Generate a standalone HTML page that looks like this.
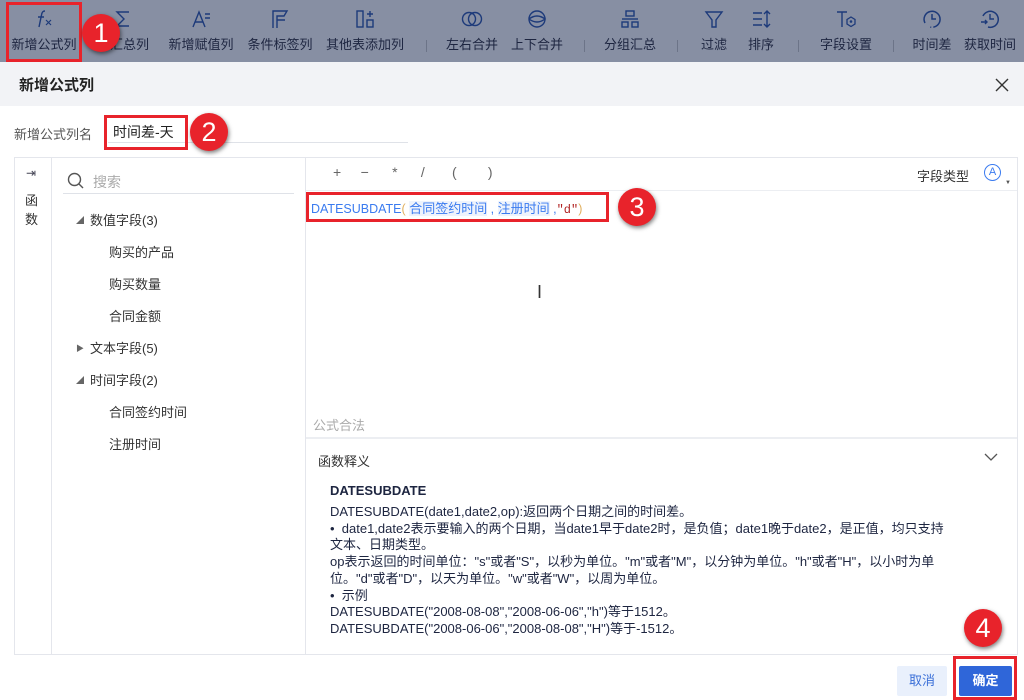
<!DOCTYPE html>
<html><head><meta charset="utf-8"><style>
*{margin:0;padding:0;box-sizing:border-box}
body{width:1024px;height:700px;overflow:hidden;background:#fff;font-family:"Liberation Sans","Noto Sans CJK SC",sans-serif;position:relative;color:#333}
.a{position:absolute}
.tb{left:0;top:0;width:1024px;height:62px;background:#878fa3}
.ti{position:absolute;top:0;height:62px;text-align:center;font-size:13px;color:#1d2540;white-space:nowrap}
.ti svg{display:block;margin:8px auto 4px;width:22px;height:22px}
.sep{position:absolute;top:40px;width:1px;height:12px;background:#6c7488}
.badge{position:absolute;width:38px;height:38px;border-radius:50%;background:#e8232b;color:#fff;font-size:27px;text-align:center;line-height:38px;box-shadow:1px 2px 4px rgba(0,0,0,.5)}
.rb{position:absolute;border:3px solid #e8232b}
.tr{height:32px;line-height:32px;white-space:nowrap}
.tr i{display:inline-block;width:14px;font-style:normal;font-size:8px;color:#666;vertical-align:top}
</style></head><body>
<div class="a tb"></div>
<div class="ti" style="left:8px;width:72px"><svg viewBox="0 0 22 22"><path d="M12 3c-2 0-3 1-3.5 4L6 19M5 9h6" stroke="#1d3a7a" stroke-width="1.4" fill="none"/><path d="M13 12l5 5M18 12l-5 5" stroke="#1d3a7a" stroke-width="1.2"/></svg>新增公式列</div>
<div class="ti" style="left:88px;width:70px"><svg viewBox="0 0 22 22"><path d="M17 4H5l7 7-7 7h12" stroke="#1d3a7a" stroke-width="1.4" fill="none"/></svg>新汇总列</div>
<div class="ti" style="left:166px;width:70px"><svg viewBox="0 0 22 22"><path d="M3 19l6-15 6 15M5 14h8M15 6h5M15 10h5" stroke="#1d3a7a" stroke-width="1.4" fill="none"/></svg>新增赋值列</div>
<div class="ti" style="left:245px;width:70px"><svg viewBox="0 0 22 22"><path d="M4 20V3h14l-3 5h-7v12M8 8v4h8" stroke="#1d3a7a" stroke-width="1.4" fill="none"/></svg>条件标签列</div>
<div class="ti" style="left:323px;width:84px"><svg viewBox="0 0 22 22"><rect x="3" y="3" width="6" height="16" stroke="#1d3a7a" stroke-width="1.4" fill="none"/><rect x="13" y="12" width="6" height="7" stroke="#1d3a7a" stroke-width="1.4" fill="none"/><path d="M16 3v6M13 6h6" stroke="#1d3a7a" stroke-width="1.4"/></svg>其他表添加列</div>
<div class="sep" style="left:426px"></div>
<div class="ti" style="left:444px;width:56px"><svg viewBox="0 0 22 22"><circle cx="8" cy="11" r="6.5" stroke="#1d3a7a" stroke-width="1.4" fill="none"/><circle cx="14" cy="11" r="6.5" stroke="#1d3a7a" stroke-width="1.4" fill="none"/></svg>左右合并</div>
<div class="ti" style="left:509px;width:56px"><svg viewBox="0 0 22 22"><circle cx="11" cy="11" r="8" stroke="#1d3a7a" stroke-width="1.4" fill="none"/><path d="M3 11q8-6 16 0q-8 6-16 0" stroke="#1d3a7a" stroke-width="1.4" fill="none"/></svg>上下合并</div>
<div class="sep" style="left:584px"></div>
<div class="ti" style="left:602px;width:56px"><svg viewBox="0 0 22 22"><rect x="7" y="3" width="8" height="5" stroke="#1d3a7a" stroke-width="1.4" fill="none"/><rect x="3" y="14" width="6" height="5" stroke="#1d3a7a" stroke-width="1.4" fill="none"/><rect x="13" y="14" width="6" height="5" stroke="#1d3a7a" stroke-width="1.4" fill="none"/><path d="M3 11h16" stroke="#1d3a7a" stroke-width="1.4"/></svg>分组汇总</div>
<div class="sep" style="left:677px"></div>
<div class="ti" style="left:697px;width:34px"><svg viewBox="0 0 22 22"><path d="M3 4h16l-6 8v7h-4v-7z" stroke="#1d3a7a" stroke-width="1.4" fill="none"/></svg>过滤</div>
<div class="ti" style="left:744px;width:34px"><svg viewBox="0 0 22 22"><path d="M3 5h9M3 11h9M3 17h9M17 3v16M14 6l3-3 3 3M14 16l3 3 3-3" stroke="#1d3a7a" stroke-width="1.4" fill="none"/></svg>排序</div>
<div class="sep" style="left:798px"></div>
<div class="ti" style="left:816px;width:60px"><svg viewBox="0 0 22 22"><path d="M2 4h10M7 4v15" stroke="#1d3a7a" stroke-width="1.4"/><path d="M16 9l4 2.5v4.5l-4 2.5-4-2.5v-4.5z" stroke="#1d3a7a" stroke-width="1.3" fill="none"/><circle cx="16" cy="13.5" r="1.3" fill="#1d3a7a"/></svg>字段设置</div>
<div class="sep" style="left:893px"></div>
<div class="ti" style="left:909px;width:46px"><svg viewBox="0 0 22 22"><path d="M4 15A8 8 0 1 1 9 19" stroke="#1d3a7a" stroke-width="1.5" fill="none" stroke-dasharray="40 2 1 2 1 2"/><path d="M11 6v5h4" stroke="#1d3a7a" stroke-width="1.5" fill="none"/></svg>时间差</div>
<div class="ti" style="left:960px;width:60px"><svg viewBox="0 0 22 22"><path d="M4 8A8 8 0 1 1 9 19" stroke="#1d3a7a" stroke-width="1.5" fill="none"/><path d="M11 6v5h4M2 14h6M6 12l2 2-2 2" stroke="#1d3a7a" stroke-width="1.4" fill="none"/></svg>获取时间</div>
<div class="rb" style="left:6px;top:2px;width:76px;height:60px"></div>
<div class="badge" style="left:82px;top:14px">1</div>

<div class="a" style="left:0;top:62px;width:1024px;height:44px;background:#f2f3f6"></div>
<div class="a" style="left:19px;top:74px;font-size:15px;font-weight:bold;color:#222">新增公式列</div>
<svg class="a" style="left:995px;top:78px" width="14" height="14"><path d="M1 1l12 12M13 1L1 13" stroke="#333" stroke-width="1.4"/></svg>

<div class="a" style="left:14px;top:124px;font-size:13px;color:#555">新增公式列名</div>
<div class="a" style="left:108px;top:142px;width:300px;height:1px;background:#dfe2e8"></div>
<div class="a" style="left:113px;top:122px;font-size:14px;color:#222">时间差-天</div>
<div class="rb" style="left:104px;top:115px;width:84px;height:35px"></div>
<div class="badge" style="left:190px;top:113px">2</div>

<div class="a" style="left:14px;top:157px;width:1004px;height:498px;border:1px solid #e4e6ec"></div>
<div class="a" style="left:51px;top:157px;width:1px;height:498px;background:#e4e6ec"></div>
<div class="a" style="left:305px;top:157px;width:1px;height:498px;background:#e4e6ec"></div>
<div class="a" style="left:26px;top:166px;font-size:12px;color:#445">⇥</div>
<div class="a" style="left:25px;top:191px;font-size:13px;line-height:19px;width:14px;color:#333">函数</div>
<svg class="a" style="left:67px;top:172px" width="18" height="18"><circle cx="7.5" cy="7.5" r="6" stroke="#555" stroke-width="1.4" fill="none"/><path d="M12 12l4 4" stroke="#555" stroke-width="1.4"/></svg>
<div class="a" style="left:93px;top:172px;font-size:14px;color:#aaa">搜索</div>
<div class="a" style="left:63px;top:193px;width:231px;height:1px;background:#dfe2e8"></div>
<div class="a" style="font-size:13px;color:#333;left:76px;top:205px">
<div class="tr"><i>◢</i>数值字段(3)</div>
<div class="tr" style="padding-left:33px">购买的产品</div>
<div class="tr" style="padding-left:33px">购买数量</div>
<div class="tr" style="padding-left:33px">合同金额</div>
<div class="tr"><i>▶</i>文本字段(5)</div>
<div class="tr"><i>◢</i>时间字段(2)</div>
<div class="tr" style="padding-left:33px">合同签约时间</div>
<div class="tr" style="padding-left:33px">注册时间</div>
</div>

<div class="a" style="left:306px;top:190px;width:711px;height:1px;background:#eceef2"></div>
<div class="a" style="left:333px;top:164px;font-size:14px;color:#666;word-spacing:0">+&nbsp;&nbsp;&nbsp;&nbsp;&nbsp;−&nbsp;&nbsp;&nbsp;&nbsp;&nbsp;&nbsp;*&nbsp;&nbsp;&nbsp;&nbsp;&nbsp;&nbsp;/&nbsp;&nbsp;&nbsp;&nbsp;&nbsp;&nbsp;&nbsp;(&nbsp;&nbsp;&nbsp;&nbsp;&nbsp;&nbsp;&nbsp;&nbsp;)</div>
<div class="a" style="left:917px;top:166px;font-size:13px;color:#333">字段类型</div>
<div class="a" style="left:984px;top:164px;width:17px;height:17px;border:1.3px solid #3a7bf0;border-radius:50%;color:#3a7bf0;font-size:11px;text-align:center;line-height:15px">A</div>
<div class="a" style="left:1005px;top:180px;font-size:6px;color:#555">▼</div>

<div class="a" style="left:311px;top:198px;font-size:12.5px;color:#3a7bf0;white-space:nowrap">DATESUBDATE<span style="color:#e0b060">(</span> <span style="background:#eef3fc;font-size:13px">合同签约时间</span> , <span style="background:#eef3fc;font-size:13px">注册时间</span> ,<span style="color:#b02020;font-family:'Liberation Mono',monospace;font-size:12px">"d"</span><span style="color:#e0b060">)</span></div>
<div class="rb" style="left:306px;top:192px;width:303px;height:30px"></div>
<div class="badge" style="left:618px;top:188px">3</div>
<div class="a" style="left:537px;top:282px;font-size:18px;color:#333">I</div>

<div class="a" style="left:313px;top:415px;font-size:13px;color:#aaa">公式合法</div>
<div class="a" style="left:306px;top:437px;width:711px;height:2px;background:#eceef2"></div>
<div class="a" style="left:318px;top:451px;font-size:13px;color:#333">函数释义</div>
<svg class="a" style="left:984px;top:452px" width="14" height="10"><path d="M1 2l6 6 6-6" stroke="#555" stroke-width="1.3" fill="none"/></svg>
<div class="a" style="left:330px;top:483px;font-size:13px;font-weight:bold;color:#1d2540">DATESUBDATE</div>
<div class="a" style="left:330px;top:504px;width:648px;font-size:13px;line-height:16.7px;color:#1d2540">DATESUBDATE(date1,date2,op):返回两个日期之间的时间差。<br>•&nbsp; date1,date2表示要输入的两个日期，当date1早于date2时，是负值；date1晚于date2，是正值，均只支持<br>文本、日期类型。<br>op表示返回的时间单位："s"或者"S"，以秒为单位。"m"或者"M"，以分钟为单位。"h"或者"H"，以小时为单<br>位。"d"或者"D"，以天为单位。"w"或者"W"，以周为单位。<br>•&nbsp; 示例<br>DATESUBDATE("2008-08-08","2008-06-06","h")等于1512。<br>DATESUBDATE("2008-06-06","2008-08-08","H")等于-1512。</div>

<div class="a" style="left:897px;top:666px;width:50px;height:30px;background:#e9f0fc;border-radius:2px;color:#3a6fd8;font-size:13px;text-align:center;line-height:30px">取消</div>
<div class="a" style="left:959px;top:666px;width:53px;height:30px;background:#2f66d9;border-radius:2px;color:#fff;font-size:13px;text-align:center;line-height:30px;font-weight:bold">确定</div>
<div class="rb" style="left:953px;top:656px;width:64px;height:44px"></div>
<div class="badge" style="left:964px;top:609px">4</div>
</body></html>
